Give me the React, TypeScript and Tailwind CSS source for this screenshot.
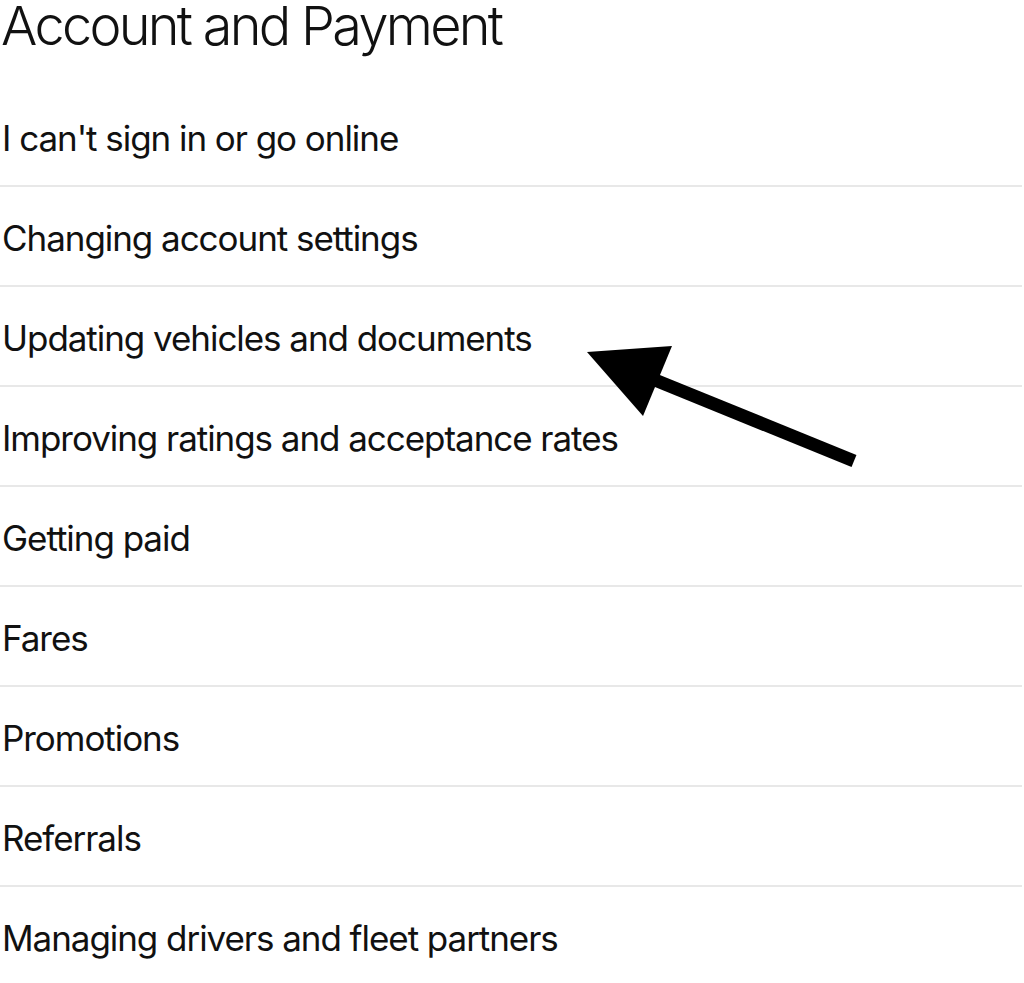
const topics = [
  "I can't sign in or go online",
  'Changing account settings',
  'Updating vehicles and documents',
  'Improving ratings and acceptance rates',
  'Getting paid',
  'Fares',
  'Promotions',
  'Referrals',
  'Managing drivers and fleet partners',
]

export default function App() {
  return (
    <div className="relative w-[1024px] h-[983px] overflow-hidden bg-white text-[#111] font-['Inter',sans-serif]">
      <h1 className="h-[87px] text-[54px] leading-[0.98] font-light tracking-[-0.05em] pl-[1px]">
        Account and Payment
      </h1>

      <ul className="pr-[2px]">
        {topics.map((t) => (
          <li
            key={t}
            className="h-[100px] flex items-center pt-[4px] border-b-2 border-[#e8e8e8] text-[35px] tracking-[-0.03em] pl-[2px]"
          >
            {t}
          </li>
        ))}
      </ul>

      {/* annotation arrow drawn over the list */}
      <svg
        className="absolute left-0 top-0 pointer-events-none"
        width="1024"
        height="983"
        viewBox="0 0 1024 983"
      >
        <line x1="854" y1="461" x2="650" y2="378" stroke="#000" strokeWidth="13" />
        <polygon points="587,352 672,346 643,416" fill="#000" />
      </svg>
    </div>
  )
}
